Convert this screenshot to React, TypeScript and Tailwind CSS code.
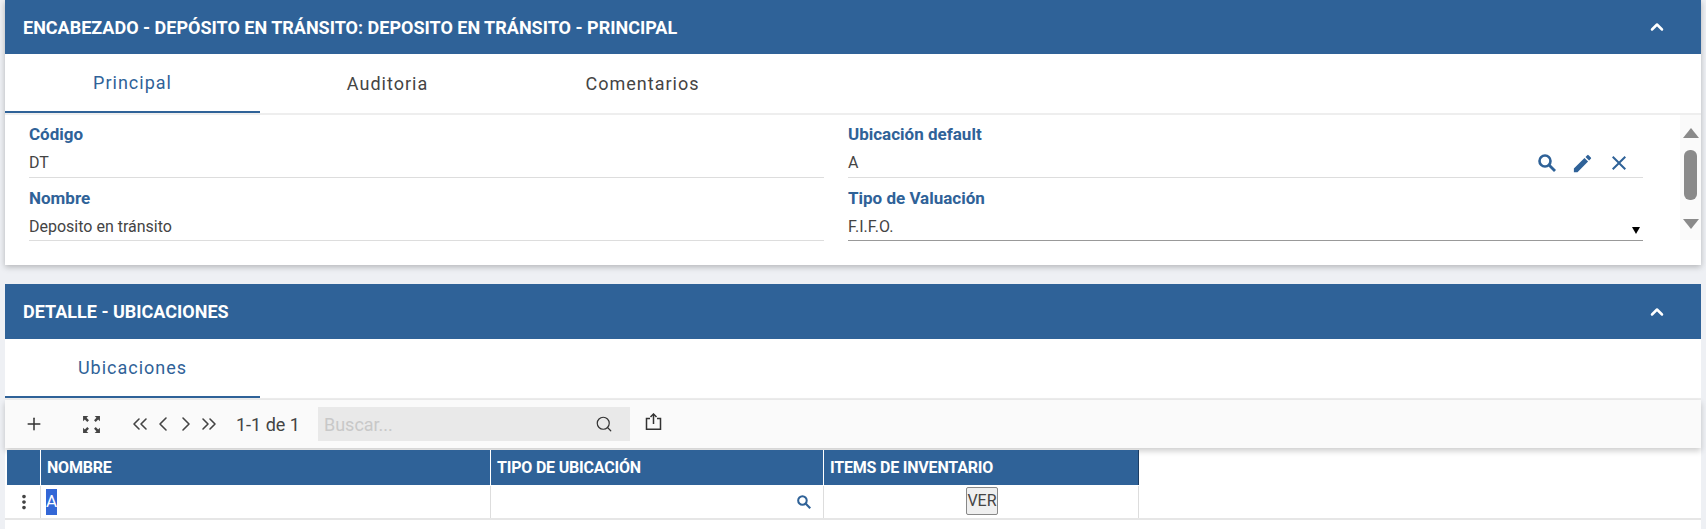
import { ChevronLeft, ChevronRight, ChevronUp, ChevronsLeft, ChevronsRight, Plus, Search } from 'lucide-react';
import { MdClose, MdEdit, MdMoreVert } from 'react-icons/md';

function PanelHeader({ title, short }: { title: string; short?: boolean }) {
    return (
        <div
            className={
                short
                    ? 'flex h-[54px] items-center justify-between bg-[#2f6298] pl-[18px] pr-[34px]'
                    : 'flex h-[55px] items-center justify-between bg-[#2f6298] pl-[18px] pr-[34px]'
            }
        >
            <span className="text-[18px] font-bold text-white uppercase">{title}</span>
            <ChevronUp className="size-[20px] text-white" strokeWidth={3} />
        </div>
    );
}

function Tab({ label, active }: { label: string; active?: boolean }) {
    return (
        <div
            className={
                active
                    ? 'flex h-full w-[255px] items-center justify-center border-b-2 border-[#2f6298] text-[#2f6298]'
                    : 'flex h-full w-[255px] items-center justify-center text-[#444444]'
            }
        >
            <span className="mb-[1px] text-[18px] tracking-[1px]">{label}</span>
        </div>
    );
}

function Field({
    label,
    value,
    dark,
    lower,
    children,
}: {
    label: string;
    value: string;
    dark?: boolean;
    lower?: boolean;
    children?: React.ReactNode;
}) {
    return (
        <div className="h-[63px]">
            <div
                className={
                    lower
                        ? 'h-[27px] pt-[12px] text-[17px] leading-[17px] font-bold text-[#2f6298]'
                        : 'h-[27px] pt-[11px] text-[17px] leading-[17px] font-bold text-[#2f6298]'
                }
            >
                {label}
            </div>
            <div
                className={
                    (dark ? 'border-[#999999] ' : 'border-[#dddddd] ') +
                    (lower ? 'pt-[8px] ' : 'pt-[7px] ') +
                    'flex h-[36px] items-center justify-between border-b text-[16px] text-[#444444]'
                }
            >
                <span>{value}</span>
                {children}
            </div>
        </div>
    );
}

function Scrollbar() {
    return (
        <div className="flex h-[125px] w-[21px] flex-col items-center bg-[#fafafa] pt-[13px]">
            <div className="h-0 w-0 border-x-[8px] border-b-[10px] border-x-transparent border-b-[#8a8a8a]" />
            <div className="mt-[12px] h-[50px] w-[13px] rounded-[6px] bg-[#8a8a8a]" />
            <div className="mt-[19px] h-0 w-0 border-x-[8px] border-t-[10px] border-x-transparent border-t-[#8a8a8a]" />
        </div>
    );
}

function ExpandIcon() {
    return (
        <svg width="19" height="19" viewBox="0 0 18 18" fill="#444444">
            <path d="M1 1h5L4.3 2.7 6.6 5 5 6.6 2.7 4.3 1 6zM17 1h-5l1.7 1.7L11.4 5 13 6.6l2.3-2.3L17 6zM1 17h5l-1.7-1.7 2.3-2.3L5 11.4l-2.3 2.3L1 12zM17 17h-5l1.7-1.7-2.3-2.3 1.6-1.6 2.3 2.3L17 12z" />
        </svg>
    );
}

function BoldSearch({ size }: { size: number }) {
    return (
        <svg width={size} height={size} viewBox="0 0 18 18" fill="none" stroke="#2f6298">
            <circle cx="7" cy="7" r="5.5" strokeWidth="2.6" />
            <path d="M11 11l6 6" strokeWidth="2.8" />
        </svg>
    );
}

function ShareIcon() {
    return (
        <svg width="17" height="17" viewBox="0 0 17 17" fill="none" stroke="#333333" strokeWidth="1.5">
            <path d="M5 5.5H1.5v10.75h14V5.5H12" />
            <path d="M8.5 11V1.5" />
            <path d="M5.5 4l3-3 3 3" />
        </svg>
    );
}

export default function App() {
    return (
        <div className="h-[529px] overflow-hidden bg-[#eef0f4] px-[5px] font-['Roboto',sans-serif]">
            <div className="h-[265px] bg-white shadow-[0_2px_6px_rgba(0,0,0,0.25)]">
                <PanelHeader title="Encabezado - Depósito en tránsito: Deposito en tránsito - Principal" short />
                <div className="flex h-[61px] border-b-2 border-[#eeeeee]">
                    <Tab label="Principal" active />
                    <Tab label="Auditoria" />
                    <Tab label="Comentarios" />
                </div>
                <div className="flex items-start pl-[24px]">
                    <div className="grid w-[1614px] grid-cols-2 gap-x-[24px]">
                        <Field label="Código" value="DT" />
                        <Field label="Ubicación default" value="A">
                            <div className="flex items-center gap-[13px] pr-[12px] text-[#2f6298]">
                                <div className="flex size-[23px] items-center justify-center">
                                    <BoldSearch size={18} />
                                </div>
                                <MdEdit className="size-[23px]" />
                                <MdClose className="size-[24px]" />
                            </div>
                        </Field>
                        <Field label="Nombre" value="Deposito en tránsito" lower />
                        <Field label="Tipo de Valuación" value="F.I.F.O." dark lower>
                            <div className="mt-[7px] mr-[3px] h-0 w-0 border-x-[4px] border-t-[7px] border-x-transparent border-t-black" />
                        </Field>
                    </div>
                    <div className="ml-[37px]">
                        <Scrollbar />
                    </div>
                </div>
            </div>
            <div className="mt-[19px] h-[245px] bg-white">
                <PanelHeader title="Detalle - Ubicaciones" />
                <div className="flex h-[61px] border-b-2 border-[#eeeeee]">
                    <Tab label="Ubicaciones" active />
                </div>
                <div className="flex h-[48px] items-center bg-[#fafafa] text-[#444444] shadow-[0_3px_6px_rgba(0,0,0,0.2)]">
                    <Plus className="ml-[19px] size-[20px] text-[#333333]" strokeWidth={1.8} />
                    <div className="ml-[38px]">
                        <ExpandIcon />
                    </div>
                    <ChevronsLeft className="ml-[27px] size-[24px]" strokeWidth={1.6} />
                    <ChevronLeft className="ml-[-1px] size-[24px]" strokeWidth={1.6} />
                    <ChevronRight className="ml-[-1px] size-[24px]" strokeWidth={1.6} />
                    <ChevronsRight className="ml-[-1px] size-[24px]" strokeWidth={1.6} />
                    <span className="ml-[15px] text-[18px]">1-1 de 1</span>
                    <div className="ml-[18px] flex h-[34px] w-[312px] items-center justify-between bg-[#e9e9e9] pr-[17px] pl-[6px]">
                        <span className="text-[18px] text-[#c8c8c8]">Buscar...</span>
                        <Search className="size-[18px] text-[#333333]" strokeWidth={1.6} />
                    </div>
                    <div className="mb-[6px] ml-[15px]">
                        <ShareIcon />
                    </div>
                </div>
                <div className="mt-[2px] border-b-2 border-[#e6e6e6]">
                    <div className="w-[1134px] pl-[2px]">
                        <div className="flex h-[35px] items-center bg-[#2f6298] text-[16px] font-bold tracking-[-0.2px] text-white">
                            <div className="h-full w-[34px] border-r border-white" />
                            <div className="flex h-full w-[450px] items-center border-r border-white pl-[6px]">NOMBRE</div>
                            <div className="flex h-full w-[333px] items-center border-r border-white pl-[6px]">TIPO DE UBICACIÓN</div>
                            <div className="flex h-full flex-1 items-center border-r border-[#1c3d63] pl-[6px]">ITEMS DE INVENTARIO</div>
                        </div>
                        <div className="flex h-[33px] border-t border-white text-[16px] text-[#444444]">
                            <div className="flex h-full w-[34px] items-center justify-center border-r border-[#dddddd]">
                                <MdMoreVert className="size-[22px]" />
                            </div>
                            <div className="flex h-full w-[450px] items-center border-r border-[#dddddd] pl-[5px]">
                                <span className="bg-[#3367d6] text-[17px] text-white">A</span>
                            </div>
                            <div className="flex h-full w-[333px] items-center justify-end border-r border-[#dddddd] pr-[12px]">
                                <BoldSearch size={14} />
                            </div>
                            <div className="flex h-full flex-1 items-center justify-center border-r border-[#dddddd] pl-[2px]">
                                <button
                                    type="button"
                                    className="mb-[2px] h-[28px] w-[32px] rounded-[2px] border border-[#888888] bg-[#efefef] text-[16px] text-[#444444]"
                                >
                                    VER
                                </button>
                            </div>
                        </div>
                    </div>
                </div>
            </div>
        </div>
    );
}
